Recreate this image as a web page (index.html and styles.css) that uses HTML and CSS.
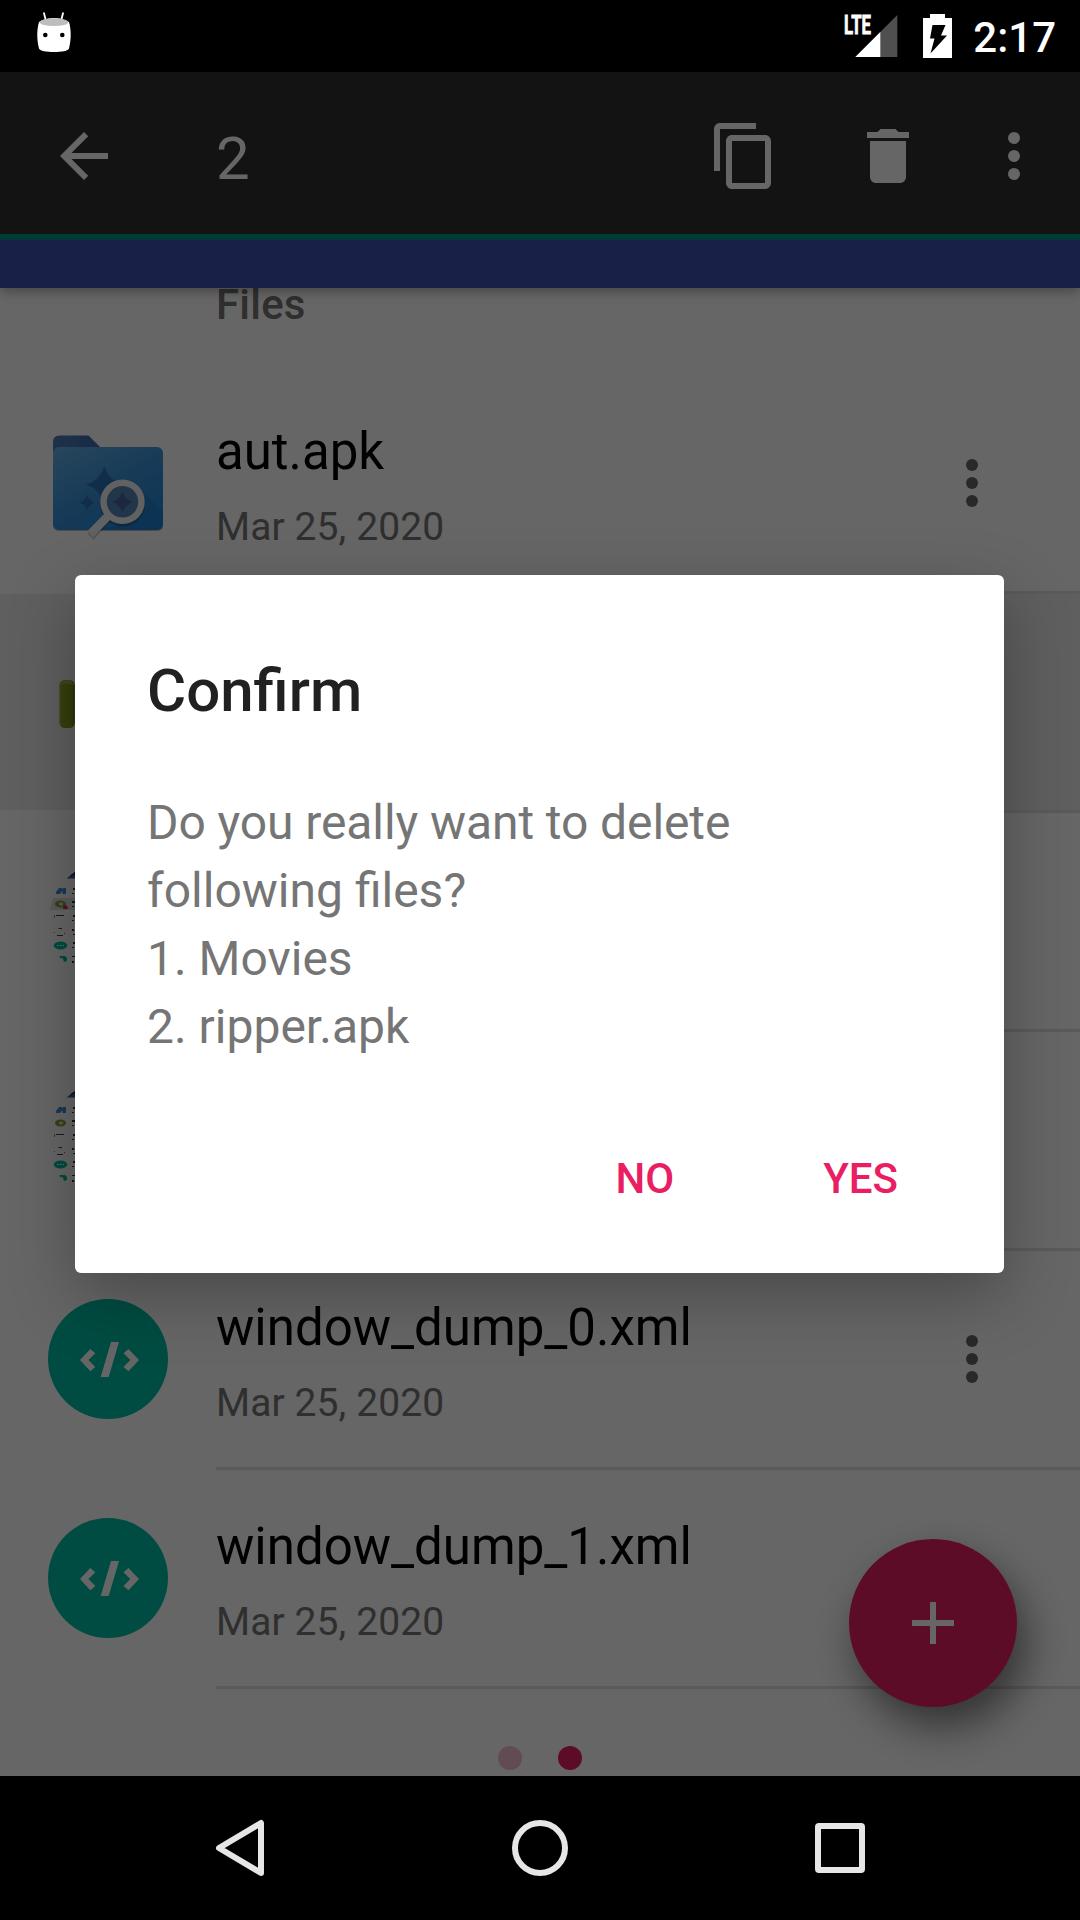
FILE: index.html
```html
<!DOCTYPE html>
<html lang="en">
<head>
<meta charset="utf-8">
<title>File manager</title>
<link rel="stylesheet" href="styles.css">
</head>
<body>
<svg class="defs" width="0" height="0" aria-hidden="true">
  <defs>
    <linearGradient id="folder-front" x1="0.1" y1="0" x2="0.8" y2="1">
      <stop offset="0" stop-color="#62aee6"/>
      <stop offset="0.5" stop-color="#3a93da"/>
      <stop offset="1" stop-color="#2387d9"/>
    </linearGradient>
    <linearGradient id="folder-back" x1="0" y1="0" x2="1" y2="0">
      <stop offset="0" stop-color="#4a7cb8"/>
      <stop offset="1" stop-color="#3f6cab"/>
    </linearGradient>
    <linearGradient id="arm" x1="0" y1="0" x2="1" y2="0">
      <stop offset="0" stop-color="#9ab548"/>
      <stop offset="0.2" stop-color="#86a01c"/>
      <stop offset="0.8" stop-color="#809a18"/>
      <stop offset="1" stop-color="#5f7410"/>
    </linearGradient>
    <symbol id="more" viewBox="0 0 24 24">
      <circle cx="12" cy="6" r="2"/><circle cx="12" cy="12" r="2"/><circle cx="12" cy="18" r="2"/>
    </symbol>
    <symbol id="code" viewBox="0 0 120 120">
      <circle cx="60" cy="60" r="60" fill="#00bfa5"/>
      <path fill="#fff" d="M32 61 42.3 50 47.3 54.3 40.5 61 47.3 68 42.3 72.3zM63 43H71L60.7 78H52.7zM75.5 54.3 80.5 50 91 61 80.5 72.3 75.5 68 82.3 61z"/>
    </symbol>
    <symbol id="thumb" viewBox="0 0 120 120">
      <path fill="#3f51b5" d="M18.500 17.500 27 11V17.500z"/>
      <path fill="#303030" d="M22 14.500 27 11V14.500z"/>
      <path fill="#009688" d="M23 15.500 27 14V15.500z"/>
      <path fill="#3d8fd6" d="M8 33V31L11 27H14V29L15 27H18V33H14.500V30L12 33z"/>
      <ellipse cx="12.500" cy="43" rx="5.500" ry="3.400" fill="#8fa336"/>
      <ellipse cx="13" cy="43" rx="2" ry="1.600" fill="#e8e8e8"/>
      <path fill="#444" d="M8 54H16V55H8zM10.500 67H14V68H10.500zM9 74H15V75H9z"/>
      <path fill="#8fa336" d="M6 54H7V57H6zM6 71H7V72H6z"/>
      <path fill="#e91e63" d="M16 72H17V73H16z"/>
      <ellipse cx="12.500" cy="84.500" rx="6.800" ry="4" fill="#00bfa5"/>
      <path fill="#fff" d="M9 84H10.500V85H9zM11.800 84H13.300V85H11.800zM14.500 84H16V85H14.500z"/>
      <path fill="#00bfa5" d="M11.500 95H17L19 97V100L16 101 15 97.500 12 97z"/>
      <path fill="#333" d="M25 27H27V29H25zM24 32H26V33H24zM24 40H27V42H24zM24 45H26V46H24zM25 54H27V56H25zM24 59H26V60H24zM24 68H26V70H24zM25 73H27V74H25zM25 81H27V83H25zM24 86H26V87H24zM24 95H27V96H24zM24 100H26V102H24z"/>
    </symbol>
  </defs>
</svg>

<div class="screen">
  <header class="status">
    <svg class="status-droid" viewBox="0 0 36 42">
      <path d="M8 1.200 10 9M27 1.200 25 9" stroke="#fff" stroke-width="1.800" stroke-linecap="round"/>
      <path fill="#fff" d="M3 10Q18 2 33 10C35.400 18 35.200 28 33 36.500 32 41.300 4 41.300 3 36.500 .800 28 .600 18 3 10z"/>
      <ellipse cx="18" cy="10.200" rx="14.300" ry="3.900" fill="#bdbdbd"/>
      <circle cx="9.300" cy="23" r="2.300"/><circle cx="26.300" cy="23" r="2.300"/>
    </svg>
    <div class="status-right">
      <svg class="signal" viewBox="0 0 56 44">
        <path fill="#4f4f4f" d="M55.300 1V43H13.300z"/>
        <path fill="#fff" d="M38.300 18V43H13.300z"/>
        <text class="lte" x="2" y="19.500" textLength="27" lengthAdjust="spacingAndGlyphs">LTE</text>
      </svg>
      <svg class="battery" viewBox="0 0 29 44">
        <path fill="#fff" d="M7 0H22V4H29V44H0V4H7z"/>
        <path fill="#000" d="M9.500 11H22.500L18 21.500H24L7.500 39.500 11.500 24.500H7z"/>
      </svg>
      <span class="clock">2:17</span>
    </div>
  </header>

  <main class="app">
    <div class="appbar">
      <div class="toolbar">
        <svg class="ic" viewBox="0 0 24 24"><path d="M20 11H7.830l5.590-5.590L12 4l-8 8 8 8 1.410-1.410L7.830 13H20v-2z"/></svg>
        <span class="count">2</span>
        <svg class="ic copy" viewBox="0 0 24 24"><path d="M16 1H4c-1.100 0-2 .9-2 2v14h2V3h12V1zm3 4H8c-1.100 0-2 .9-2 2v14c0 1.100.9 2 2 2h11c1.100 0 2-.9 2-2V7c0-1.100-.9-2-2-2zm0 16H8V7h11v14z"/></svg>
        <svg class="ic delete" viewBox="0 0 24 24"><path d="M6 19c0 1.100.9 2 2 2h8c1.100 0 2-.9 2-2V7H6v12zM19 4h-3.500l-1-1h-5l-1 1H5v2h14V4z"/></svg>
        <svg class="ic overflow"><use href="#more"/></svg>
      </div>
      <div class="strip"></div>
    </div>

    <div class="list">
      <h2 class="section">Files</h2>

      <div class="row">
        <svg class="icon" viewBox="0 0 120 120">
          <path fill="#000" opacity=".25" d="M5 99H115V102Q115 108 109 108H11Q5 108 5 102z"/>
          <path fill="url(#folder-back)" d="M5 40V19Q5 12.500 11.500 12.500H40.500L53 25V40z"/>
          <rect x="5" y="24" width="110" height="83" rx="6" fill="url(#folder-front)"/>
          <path fill="#1a75c4" opacity=".45" d="M90 64 115 88V101Q115 107 109 107H55L74 100z"/>
          <path fill="#2a70b8" d="M56.300 43.500Q60.500 57.500 74.500 61.700 60.500 66 56.300 80 52 66 38 61.700 52 57.500 56.300 43.500zM39.300 72Q41.300 77.500 46.800 79.500 41.300 81.500 39.300 87 37.300 81.500 31.800 79.500 37.300 77.500 39.300 72z"/>
          <path stroke="#000" stroke-width="8.500" opacity=".2" d="M60 95 42.500 113.500"/>
          <circle cx="74.500" cy="81" r="19.500" fill="none" stroke="#000" stroke-width="6.500" opacity=".2"/>
          <circle cx="74.500" cy="78.800" r="18" fill="#5687b8"/>
          <path fill="#45649f" d="M74.500 68.500Q77.200 76.300 85 79 77.200 81.700 74.500 89.500 71.800 81.700 64 79 71.800 76.300 74.500 68.500z"/>
          <circle cx="74.500" cy="78.800" r="19" fill="none" stroke="#f2f2f2" stroke-width="6.500"/>
          <path stroke="#f2f2f2" stroke-width="8.500" d="M61.500 91.500 42 111.500"/>
        </svg>
        <div class="text"><div class="name">aut.apk</div><div class="date">Mar 25, 2020</div></div>
        <svg class="menu"><use href="#more"/></svg>
      </div>

      <div class="row selected">
        <svg class="icon" viewBox="0 0 120 120">
          <rect x="11.300" y="38" width="15.500" height="48" rx="5.500" fill="url(#arm)"/>
          <path fill="#b9cf7c" opacity=".5" d="M12 43Q14 38.300 19 38.300 24 38.300 26 43 19 40 12 43z"/>
        </svg>
      </div>

      <div class="row">
        <svg class="icon" viewBox="0 0 120 120">
          <path fill="#e0e0e0" d="M5 37H60V49H2z"/>
          <use href="#thumb"/>
          <path fill="#e91e63" d="M15 48Q15 44 18 44 20 46 20 48z"/>
        </svg>
      </div>

      <div class="row">
        <svg class="icon"><use href="#thumb"/></svg>
      </div>

      <div class="row">
        <svg class="icon"><use href="#code"/></svg>
        <div class="text"><div class="name">window_dump_0.xml</div><div class="date">Mar 25, 2020</div></div>
        <svg class="menu"><use href="#more"/></svg>
      </div>

      <div class="row">
        <svg class="icon"><use href="#code"/></svg>
        <div class="text"><div class="name">window_dump_1.xml</div><div class="date">Mar 25, 2020</div></div>
      </div>

      <div class="pager"><span class="dot"></span><span class="dot active"></span></div>
    </div>

    <div class="fab">
      <svg viewBox="0 0 42 42"><path d="M18 0H24V18H42V24H24V42H18V24H0V18H18z"/></svg>
    </div>

    <div class="scrim">
      <div class="dialog">
        <h1 class="dialog-title">Confirm</h1>
        <p class="dialog-body"><span class="question">Do you really want to delete</span><br>following files?<br>1. Movies<br>2. ripper.apk</p>
        <div class="dialog-actions"><span>NO</span><span>YES</span></div>
      </div>
    </div>
  </main>

  <nav class="navbar">
    <svg viewBox="0 0 60 60"><path d="M51 5V55L9 30z"/></svg>
    <svg viewBox="0 0 60 60"><circle cx="30" cy="30" r="25"/></svg>
    <svg viewBox="0 0 60 60"><rect x="8" y="8" width="44" height="44" rx="1"/></svg>
  </nav>
</div>
</body>
</html>
```
FILE: styles.css
```css
* { box-sizing: border-box; margin: 0; padding: 0; }

body {
  width: 1080px;
  height: 1920px;
  overflow: hidden;
  font-family: Roboto, "Noto Sans", sans-serif;
  background: #000;
}

svg { display: block; flex: none; }
.defs { position: absolute; }

.screen {
  display: grid;
  grid-template-rows: 72px 1704px 144px;
  height: 1920px;
}

/* Status bar */
.status {
  display: flex;
  justify-content: space-between;
  padding: 12px 24px 0 36px;
  background: #000;
}
.status-droid { width: 36px; height: 42px; }
.status-right { display: flex; align-items: flex-start; padding-top: 2px; }
.signal { width: 56px; height: 44px; margin-right: 25px; overflow: visible; }
.lte { font-size: 25px; font-weight: 700; fill: #fff; stroke: #fff; stroke-width: .8; }
.battery { width: 29px; height: 44px; margin-right: 21px; }
.clock {
  font-size: 42px;
  font-weight: 500;
  line-height: 48px;
  color: #fff;
}

/* App content */
.app {
  position: relative;
  display: flex;
  flex-direction: column;
  overflow: hidden;
  background: #fff;
}
.appbar {
  position: relative;
  z-index: 1;
  box-shadow: 0 3px 12px rgba(0, 0, 0, .35);
}
.toolbar {
  display: flex;
  align-items: center;
  height: 168px;
  padding: 0 30px 0 48px;
  background: #303030;
  border-bottom: 6px solid #009688;
  color: #fff;
}
.ic { width: 72px; height: 72px; margin-top: 6px; fill: #fff; }
.count {
  flex: 1;
  padding: 12px 0 0 96px;
  font-size: 60px;
  line-height: 70px;
}
.delete { margin-left: 72px; }
.overflow { margin-left: 54px; }
.strip { height: 48px; background: #3f51b5; }

/* File list */
.section {
  height: 94px;
  margin-top: -7px;
  padding-left: 216px;
  font-size: 42px;
  font-weight: 500;
  line-height: 48px;
  letter-spacing: .2px;
  color: #757575;
}
.row {
  display: flex;
  height: 219px;
  padding-left: 48px;
  background: linear-gradient(#e0e0e0, #e0e0e0) 216px 216px / 864px 3px no-repeat;
}
.row.selected {
  background:
    linear-gradient(#e0e0e0, #e0e0e0) 216px 216px / 864px 3px no-repeat,
    linear-gradient(#eee, #eee) 0 0 / 1080px 216px no-repeat;
}
.icon { width: 120px; height: 120px; margin: 48px 48px 0 0; }
.text { flex: 1; padding-top: 47px; }
.name { font-size: 51px; line-height: 60px; color: #000; }
.date { margin-top: 22px; font-size: 39px; line-height: 46px; letter-spacing: .1px; color: #757575; }
.menu { width: 72px; height: 72px; margin: 72px 72px 0 0; fill: #666; }

.pager { display: flex; justify-content: center; gap: 36px; padding-top: 57px; }
.dot { width: 24px; height: 24px; border-radius: 50%; background: #f8bbd0; }
.dot.active { background: #e91e63; }

.fab {
  position: absolute;
  right: 63px;
  bottom: 69px;
  display: grid;
  place-items: center;
  width: 168px;
  height: 168px;
  border-radius: 50%;
  background: #e91e63;
  box-shadow: 9px 20px 42px rgba(0, 0, 0, .5);
}
.fab svg { width: 42px; height: 42px; fill: #fff; }

/* Dialog */
.scrim {
  position: absolute;
  inset: 0;
  z-index: 2;
  display: flex;
  justify-content: center;
  align-items: flex-start;
  padding: 503px 1px 0 0;
  background: rgba(0, 0, 0, .6);
}
.dialog {
  width: 929px;
  height: 698px;
  padding: 81px 106px 0 72px;
  border-radius: 6px;
  background: #fff;
  box-shadow: 0 22px 66px rgba(0, 0, 0, .29);
}
.dialog-title {
  font-size: 60px;
  font-weight: 500;
  line-height: 70px;
  /* em-relative tracking would drop the fi ligature, so only word kerning is left on */
  font-kerning: normal;
  color: #212121;
}
.dialog-body { margin-top: 63px; font-size: 48px; line-height: 68px; color: #757575; white-space: nowrap; }
.question { letter-spacing: -.09px; }
.dialog-actions {
  display: flex;
  justify-content: flex-end;
  gap: 149px;
  margin-top: 93px;
  font-size: 42px;
  font-weight: 500;
  line-height: 50px;
  color: #e91e63;
}

/* System navigation */
.navbar {
  display: flex;
  justify-content: center;
  align-items: center;
  gap: 240px;
  background: #000;
}
.navbar svg {
  width: 60px;
  height: 60px;
  fill: none;
  stroke: #e6e6e6;
  stroke-width: 6;
  stroke-linejoin: round;
}
```
